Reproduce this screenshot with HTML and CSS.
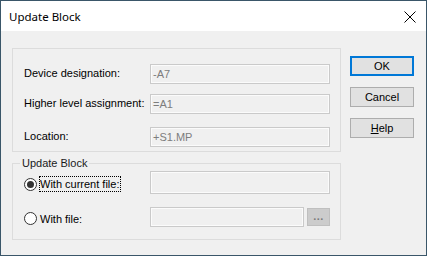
FILE: index.html
```html
<!DOCTYPE html>
<html lang="en">
<head>
  <meta charset="UTF-8" />
  <title>Update Block</title>
  <link rel="stylesheet" href="styles.css">
</head>
<body>
  <div class="window">
    <div class="titlebar">
      <span class="title">Update Block</span>
      <svg class="close" width="12" height="12" viewBox="0 0 12 12">
        <path d="M0.5 0.5 L11.5 11.5 M11.5 0.5 L0.5 11.5" stroke="#000" stroke-width="1" fill="none" />
      </svg>
    </div>

    <div class="content">
      <div class="main">
        <div class="group fields">
          <div class="row">
            <label>Device designation:</label>
            <div class="edit">-A7</div>
          </div>
          <div class="row second">
            <label>Higher level assignment:</label>
            <div class="edit">=A1</div>
          </div>
          <div class="row third">
            <label>Location:</label>
            <div class="edit">+S1.MP</div>
          </div>
        </div>

        <fieldset class="group update">
          <legend>Update Block</legend>
          <div class="inner">
            <div class="row tall">
              <div class="choice">
                <span class="radio checked"></span>
                <span class="focus">With current file:</span>
              </div>
              <div class="edit"></div>
            </div>
            <div class="row second">
              <div class="choice">
                <span class="radio"></span>
                <span class="nofocus">With file:</span>
              </div>
              <div class="edit short"></div>
              <div class="browse">...</div>
            </div>
          </div>
        </fieldset>
      </div>

      <div class="buttons">
        <div class="btn default">OK</div>
        <div class="btn">Cancel</div>
        <div class="btn"><u>H</u>elp</div>
      </div>
    </div>
  </div>
</body>
</html>
```

FILE: styles.css
```css
body {
  margin: 0;
  font-family: "Liberation Sans", Arial, sans-serif;
  font-size: 11px;
  color: #000;
}
.window {
  width: 427px;
  height: 256px;
  box-sizing: border-box;
  border: 1px solid #3a5669;
  background: #f0f0f0;
}
.titlebar {
  height: 30px;
  background: #fff;
  display: flex;
  align-items: center;
  justify-content: space-between;
  padding: 0 10px 0 8px;
}
.title {
  font-family: "Noto Sans", sans-serif;
  font-size: 11.5px;
  margin-top: 1px;
}
.close {
  margin-top: 1px;
}
.content {
  display: flex;
  padding: 17px 0 0 11px;
}
.main {
  width: 329px;
}
.group {
  border: 1px solid #dcdcdc;
  box-sizing: border-box;
}
.fields {
  height: 104px;
  padding: 15px 10px 0 11px;
}
.row {
  display: flex;
  align-items: center;
  height: 20px;
}
.row.second {
  margin-top: 10px;
}
.row.third {
  margin-top: 13px;
}
.fields label {
  width: 126px;
  margin-top: -2px;
}
.edit {
  box-sizing: border-box;
  width: 180px;
  height: 100%;
  margin-left: auto;
  border: 1px solid #cacaca;
  box-shadow: inset 0 0 0 1px #fbfbfb;
  background: #f0f0f0;
  color: #7d7d7d;
  padding: 0 2px;
  line-height: 18px;
}
.update {
  margin: 5px 0 0;
  padding: 0;
  min-width: 0;
}
.update legend {
  margin-left: 7px;
  padding: 0 2px;
  line-height: 13px;
  color: #1a1a1a;
}
.inner {
  padding: 1px 10px 12px 11px;
}
.row.tall {
  height: 23px;
}
.update .row.second {
  height: 20px;
  margin-top: 13px;
}
.choice {
  display: flex;
  align-items: center;
  margin-top: 3px;
}
.radio {
  width: 13px;
  height: 13px;
  box-sizing: border-box;
  border: 1px solid #333;
  border-radius: 50%;
  background: #fff;
  display: flex;
  align-items: center;
  justify-content: center;
}
.radio.checked::after {
  content: "";
  width: 7px;
  height: 7px;
  border-radius: 50%;
  background: #333;
}
.focus {
  margin-left: 2px;
  border: 1px dotted #000;
  line-height: 14px;
  padding: 0 1px 0 0;
}
.nofocus {
  margin-left: 3px;
}
.edit.short {
  width: 154px;
}
.browse {
  width: 23px;
  height: 18px;
  box-sizing: border-box;
  margin-left: 3px;
  background: #cccccc;
  border: 1px solid #bfbfbf;
  color: #7a7a7a;
  font-weight: bold;
  text-align: center;
  line-height: 14px;
  letter-spacing: 0.5px;
}
.buttons {
  display: flex;
  flex-direction: column;
  gap: 11px;
  margin: 8px 0 0 9px;
}
.btn {
  width: 64px;
  height: 20px;
  box-sizing: border-box;
  background: #e1e1e1;
  border: 1px solid #adadad;
  text-align: center;
  line-height: 18px;
}
.btn.default {
  border: 2px solid #0078d7;
  line-height: 16px;
}
```
